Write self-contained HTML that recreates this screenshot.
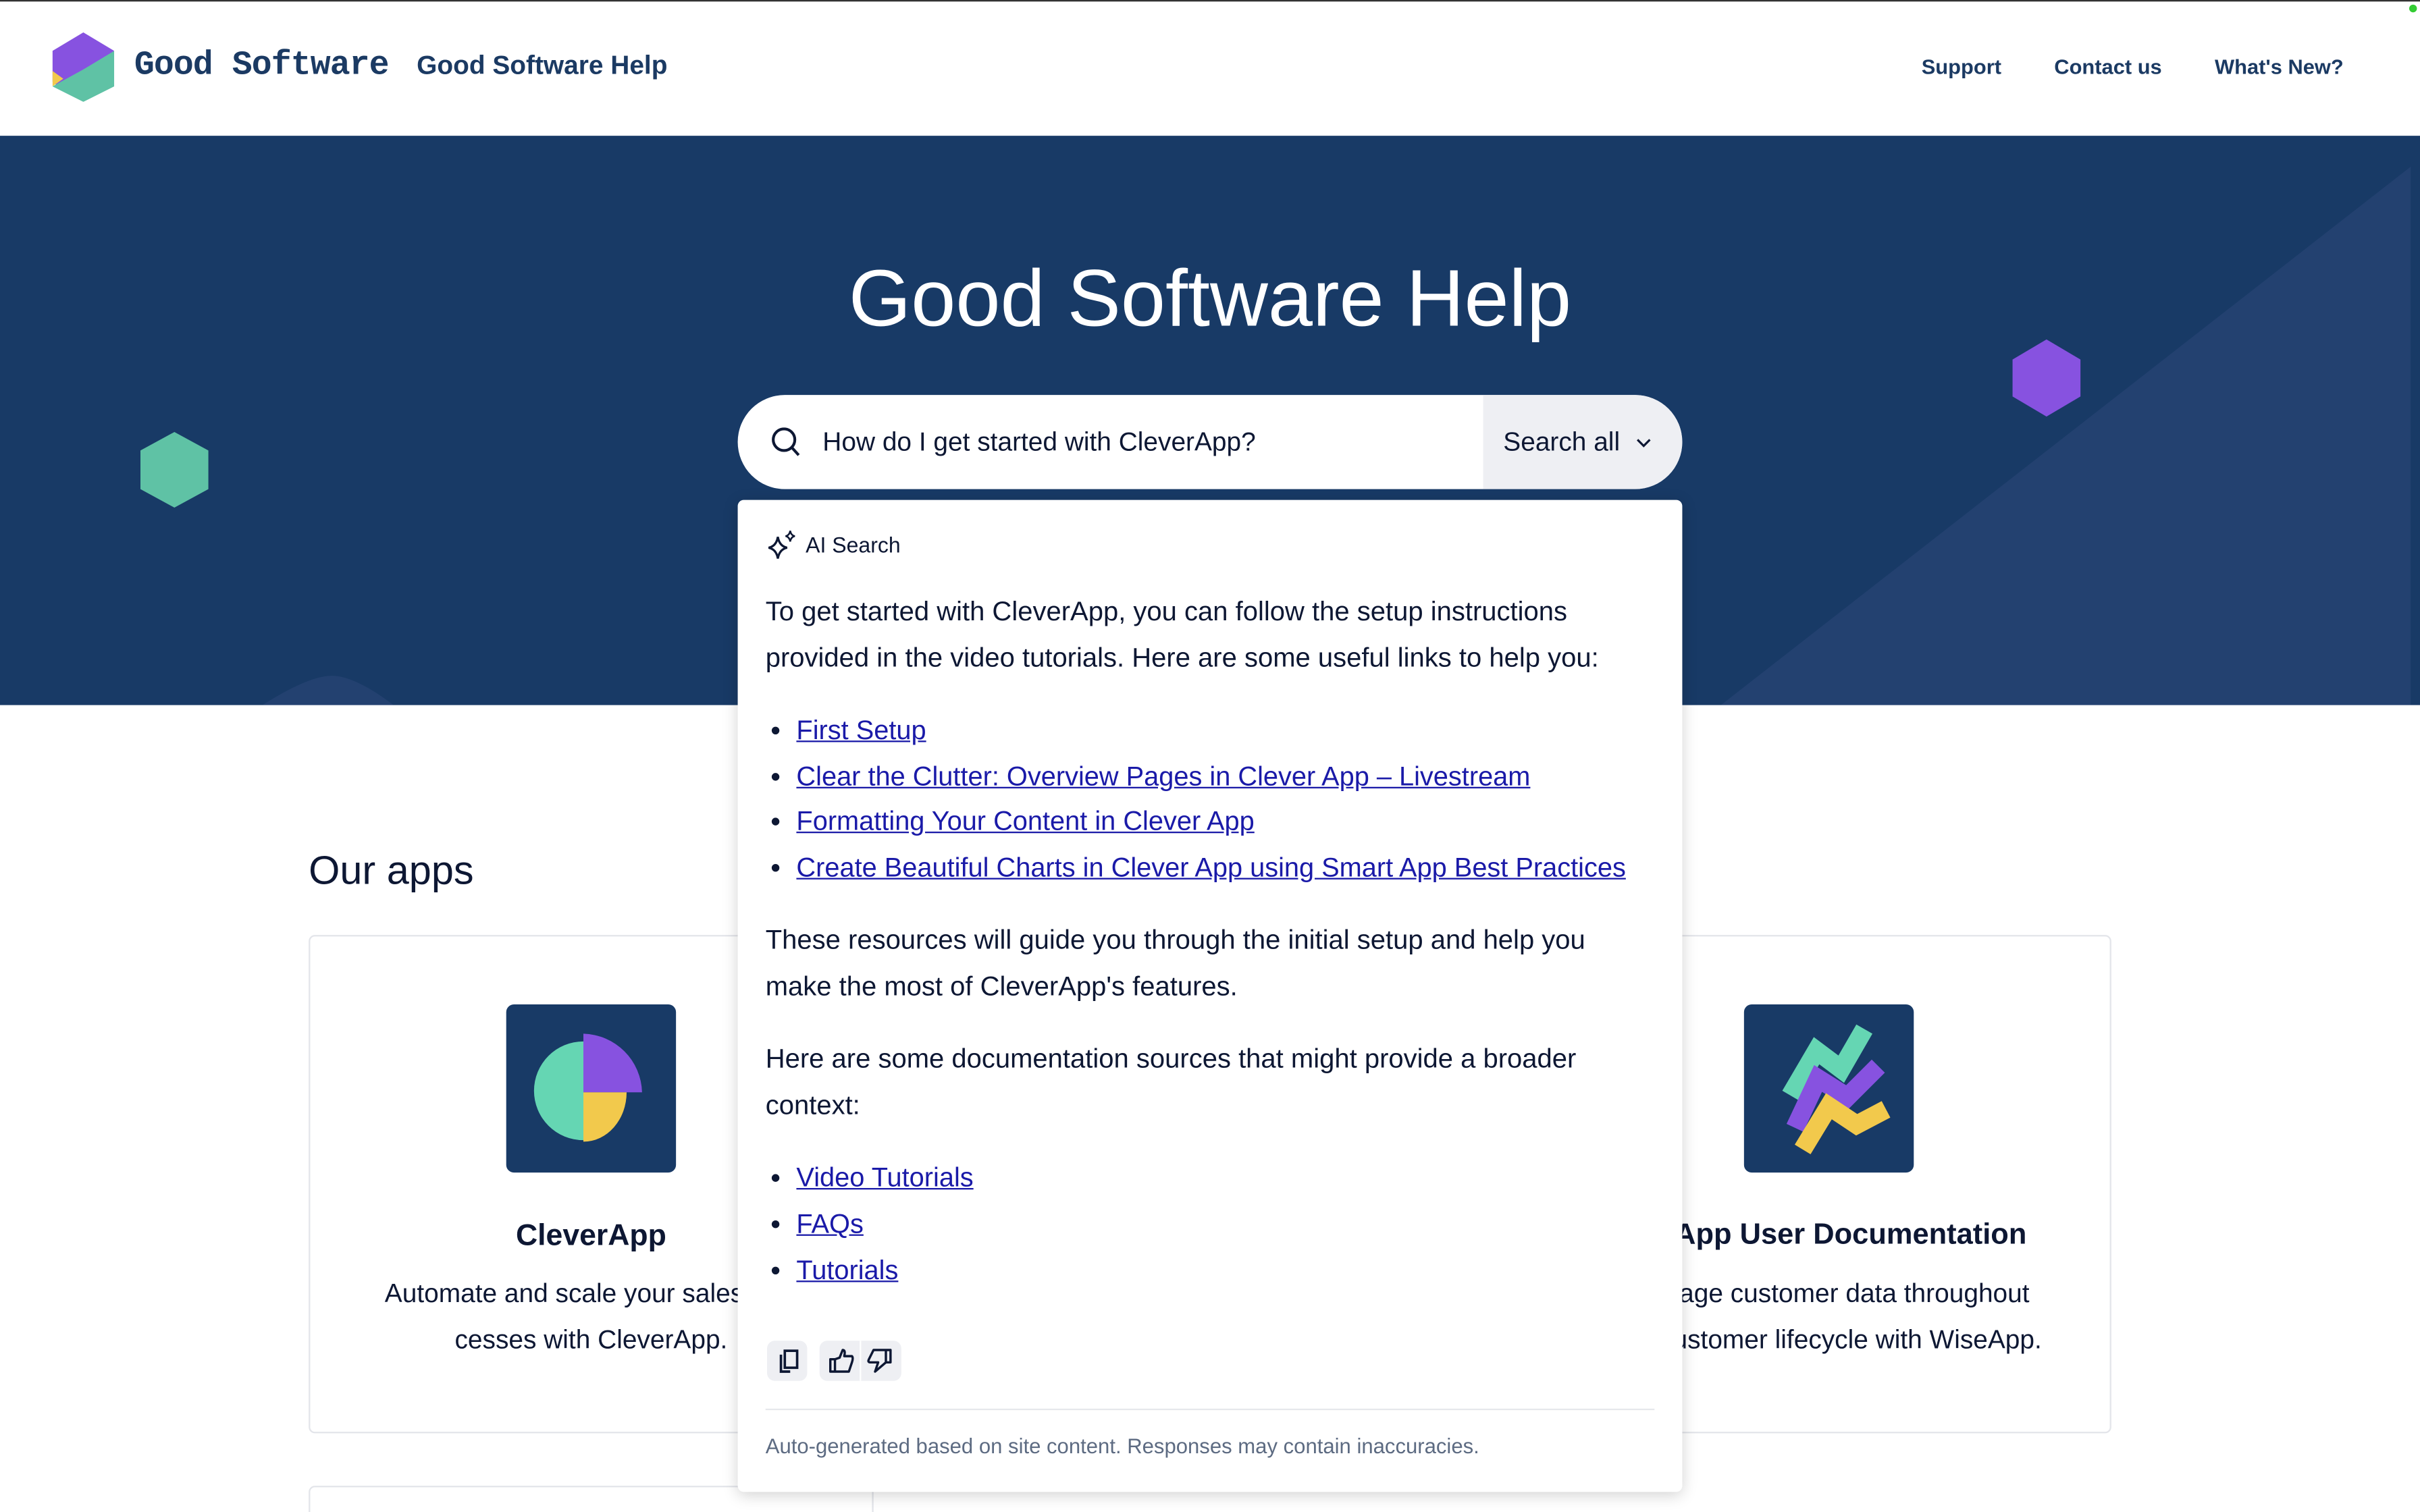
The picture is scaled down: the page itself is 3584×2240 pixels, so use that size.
<!DOCTYPE html>
<html><head><meta charset="utf-8"><style>
*{margin:0;padding:0;box-sizing:border-box}
html,body{width:3584px;height:2240px;overflow:hidden;background:#fff}
#w{width:1568px;height:980px;transform:scale(2.285714);transform-origin:0 0;position:relative;font-family:"Liberation Sans",sans-serif;color:#0d1733;overflow:hidden}
.a{position:absolute}
.nav{font-size:13.5px;color:#1b3a63;font-weight:bold;top:36px}
.hero{left:0;top:88px;width:1568px;height:369px;background:#183a66;overflow:hidden}
.card{border:1px solid #e3e5ea;border-radius:4px;background:#fff}
.ib{width:110px;height:109px;background:#183a66;border-radius:5px}
.ct{font-size:19.5px;font-weight:bold;width:366px;text-align:center}
.cd{font-size:17px;line-height:30px;width:366px;text-align:center;white-space:nowrap}
.pop{left:478px;top:324px;width:612px;height:643px;background:#fff;border-radius:4px;box-shadow:0 2px 10px rgba(0,0,0,.18)}
.p{position:absolute;left:18px;font-size:17.5px;line-height:30px;white-space:nowrap}
.li{position:absolute;left:22px;font-size:17.4px;line-height:30px;white-space:nowrap}
.li:before{content:"";position:absolute;left:0;top:13px;width:5px;height:5px;border-radius:50%;background:#0d1733}
.li a{margin-left:16px;color:#1a1aa8;text-decoration:underline}
.btn{background:#eeeff3;border-radius:5px;height:26px;top:545px}
</style></head><body><div id="w">
<div class="a" style="left:0;top:0;width:1568px;height:1px;background:#333"></div>
<svg class="a" style="left:34px;top:21px" width="40" height="45" viewBox="0 0 40 45"><polygon points="20,0 40,12 40,12 7,38 0,32 0,12" fill="#8752e0"/><polygon points="0,25 7,30 0,35" fill="#f2c94c"/><polygon points="40,12 40,35 20,45 0,35 20,24" fill="#5fc2a5"/></svg>
<div class="a" style="left:87px;top:30px;font-family:'Liberation Mono',monospace;font-size:21.8px;color:#1b3a63;font-weight:bold;letter-spacing:-0.4px">Good Software</div>
<div class="a" style="left:270px;top:33px;font-size:17px;color:#1b3a63;font-weight:bold">Good Software Help</div>
<div class="a nav" style="left:1245px">Support</div>
<div class="a nav" style="left:1331px">Contact us</div>
<div class="a nav" style="left:1435px">What's New?</div>
<div class="a" style="left:1561px;top:3px;width:5px;height:5px;border-radius:50%;background:#3c3"></div>
<div class="a hero">
<svg class="a" style="left:0;top:0" width="1568" height="369"><polygon points="1562,20 1562,369 1115,369" fill="#234170"/><path d="M170,369 Q200,350 215,350 Q230,350 255,369Z" fill="#234170"/><polygon points="113,192 135,204 135,229 113,241 91,229 91,204" fill="#5fc2a5"/><polygon points="1326,132 1348,145 1348,169 1326,182 1304,169 1304,145" fill="#8752e0"/></svg>
<div class="a" style="left:0;width:1568px;top:76px;text-align:center;color:#fff;font-size:52px">Good Software Help</div>
<div class="a" style="left:478px;top:168px;width:612px;height:61px;border-radius:31px;background:#fff;overflow:hidden">
<svg class="a" style="left:21px;top:20px" width="20" height="22" viewBox="0 0 20 22"><circle cx="9" cy="9" r="7" fill="none" stroke="#0d1733" stroke-width="1.8"/><line x1="14" y1="14" x2="18.5" y2="19" stroke="#0d1733" stroke-width="1.8"/></svg>
<div class="a" style="left:55px;top:21px;font-size:17px">How do I get started with CleverApp?</div>
<div class="a" style="left:483px;top:0;width:129px;height:61px;background:#eeeff3"></div>
<div class="a" style="left:496px;top:21px;font-size:17px">Search all</div>
<svg class="a" style="left:582px;top:27px" width="10" height="8"><path d="M1,2 L5,6 L9,2" fill="none" stroke="#0d1733" stroke-width="1.4"/></svg>
</div>
</div>
<div class="a" style="left:200px;top:549px;font-size:26px">Our apps</div>
<div class="a card" style="left:200px;top:606px;width:366px;height:323px"></div>
<div class="a card" style="left:1002px;top:606px;width:366px;height:323px"></div>
<div class="a card" style="left:200px;top:963px;width:366px;height:60px"></div>
<div class="a ib" style="left:328px;top:651px"><svg width="110" height="109"><path d="M50,24 A30,30 0 0 0 50,88 Z" fill="#65d6b3"/><path d="M50,19 A39,39 0 0 1 88,57 L50,57 Z" fill="#8752e0"/><path d="M50,57 L78,57 A28,32 0 0 1 50,89 Z" fill="#f2c94c"/></svg></div>
<div class="a ct" style="left:200px;top:790px;font-weight:600">CleverApp</div>
<div class="a cd" style="left:200px;top:824px">Automate and scale your sales pro-<br>cesses with CleverApp.</div>
<div class="a ib" style="left:1130px;top:651px"><svg width="110" height="109"><path d="M30,59 L47,30 L63,42 L78,16" fill="none" stroke="#65d6b3" stroke-width="12" stroke-linejoin="miter"/><path d="M33,80 L48,48 L67,60 L87,40" fill="none" stroke="#8752e0" stroke-width="12"/><path d="M38,94 L55,66 L73,78 L92,68" fill="none" stroke="#f2c94c" stroke-width="12"/></svg></div>
<div class="a ct" style="left:994px;top:790px;font-size:19px">WiseApp User Documentation</div>
<div class="a cd" style="left:1002px;top:824px">Manage customer data throughout<br>the customer lifecycle with WiseApp.</div>
<div class="a pop">
<svg class="a" style="left:19px;top:19px" width="20" height="20" viewBox="0 0 20 20"><path d="M7,5 Q8,11 13,12 Q8,13 7,19 Q6,13 1,12 Q6,11 7,5Z" fill="none" stroke="#0d1733" stroke-width="1.4"/><path d="M15,1 Q15.5,4 18,4.5 Q15.5,5 15,8 Q14.5,5 12,4.5 Q14.5,4 15,1Z" fill="none" stroke="#0d1733" stroke-width="1.1"/></svg>
<div class="a" style="left:44px;top:21px;font-size:14px">AI Search</div>
<div class="p" style="top:57px">To get started with CleverApp, you can follow the setup instructions<br>provided in the video tutorials. Here are some useful links to help you:</div>
<div class="li" style="top:134px"><a>First Setup</a></div>
<div class="li" style="top:164px"><a>Clear the Clutter: Overview Pages in Clever App – Livestream</a></div>
<div class="li" style="top:193px"><a>Formatting Your Content in Clever App</a></div>
<div class="li" style="top:223px"><a>Create Beautiful Charts in Clever App using Smart App Best Practices</a></div>
<div class="p" style="top:270px">These resources will guide you through the initial setup and help you<br>make the most of CleverApp's features.</div>
<div class="p" style="top:347px">Here are some documentation sources that might provide a broader<br>context:</div>
<div class="li" style="top:424px"><a>Video Tutorials</a></div>
<div class="li" style="top:454px"><a>FAQs</a></div>
<div class="li" style="top:484px"><a>Tutorials</a></div>
<div class="a btn" style="left:19px;width:26px"><svg width="26" height="26"><path d="M9,9 V20 H15" fill="none" stroke="#0d1733" stroke-width="1.6"/><rect x="11.5" y="6.5" width="8" height="11" fill="none" stroke="#0d1733" stroke-width="1.6"/></svg></div>
<div class="a btn" style="left:53px;width:53px"><svg width="53" height="26"><path d="M7,12 H10 V20 H7Z M10,12 L13,11 L15,6 Q17,6 16,10 H21 Q22,11 21,14 L19,20 H10" fill="none" stroke="#0d1733" stroke-width="1.5" stroke-linejoin="round"/><line x1="26.5" y1="0" x2="26.5" y2="26" stroke="#fff" stroke-width="1"/><path d="M46,6 H43 V14 H46Z M43,6 H35 L32,12 Q31,14 33,14 H38 L36,20 L43,14" fill="none" stroke="#0d1733" stroke-width="1.5" stroke-linejoin="round"/></svg></div>
<div class="a" style="left:18px;top:589px;width:576px;height:1px;background:#e6e8ec"></div>
<div class="a" style="left:18px;top:606px;font-size:13.6px;color:#5d6b82">Auto-generated based on site content. Responses may contain inaccuracies.</div>
</div>
</div></body></html>
